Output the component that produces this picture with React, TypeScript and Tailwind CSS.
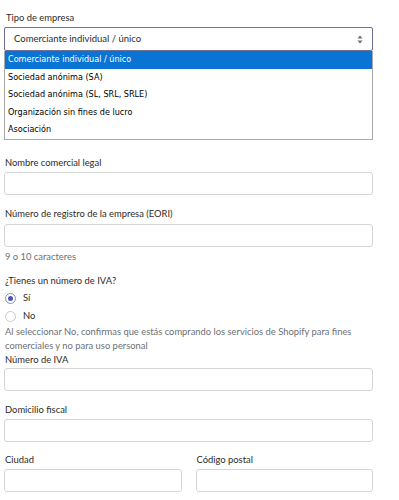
import React from "react";

const font = { fontFamily: 'Lato, "Open Sans", sans-serif' };

const Field = ({ label, className = "", gap = "mt-[2px]" }: { label: string; className?: string; gap?: string }) => (
  <div className={className}>
    <div className="text-[9.4px] leading-[14px] text-[#2b2b2b] pl-px">{label}</div>
    <div className={`${gap} h-[23px] w-full rounded-[3px] border border-[#d4d6d8] bg-white`} />
  </div>
);

const options = [
  "Comerciante individual / único",
  "Sociedad anónima (SA)",
  "Sociedad anónima (SL, SRL, SRLE)",
  "Organización sin fines de lucro",
  "Asociación",
];

export default function App() {
  return (
    <div className="w-[399px] h-[500px] bg-white overflow-hidden" style={font}>
      <div className="ml-[4px] w-[369px] pt-[11px]">
        <div className="text-[9.4px] leading-[14px] text-[#2b2b2b] pl-[2px]">Tipo de empresa</div>
        <div className="relative mt-[2px]">
          <div className="flex h-[24px] items-center justify-between rounded-[2px] border border-[#6c6f96] bg-white pl-[9px] pr-[9px] text-[9.5px] text-[#2b2b2b]">
            <span>Comerciante individual / único</span>
            <svg width="6" height="9" viewBox="0 0 6 9" className="text-[#6d7175]">
              <path d="M3 0.5 L5.5 3.5 H0.5 Z" fill="currentColor" />
              <path d="M3 8.5 L5.5 5.5 H0.5 Z" fill="currentColor" />
            </svg>
          </div>
          <div
            className="absolute left-0 top-full z-10 w-[369px] border border-[#a9a9a9] border-t-0 bg-white text-[9px] text-black"
            style={{ fontFamily: '"DejaVu Sans Condensed", "Liberation Sans", sans-serif' }}
          >
            {options.map((o, i) => (
              <div
                key={o}
                className={`h-[17.5px] leading-[17.5px] pl-[3px] ${i === 0 ? "bg-[#0a74d4] text-white" : ""}`}
              >
                {o}
              </div>
            ))}
          </div>
        </div>

        {/* input hidden under the open list */}
        <div className="mt-[43px] h-[23px] w-full rounded-[3px] border border-[#d4d6d8]" />

        <Field label="Nombre comercial legal" className="mt-[39px]" />
        <Field label="Número de registro de la empresa (EORI)" className="mt-[12px]" gap="mt-[3px]" />
        <div className="mt-[3px] text-[9.4px] leading-[14px] text-[#6d7175] pl-px">9 o 10 caracteres</div>

        <div className="mt-[10px] text-[9.4px] leading-[14px] text-[#2b2b2b] pl-px">¿Tienes un número de IVA?</div>
        <div className="mt-[1px] flex h-[18px] items-center gap-[7px] pl-px">
          <span className="flex h-[11px] w-[11px] items-center justify-center rounded-full border border-[#8a8fb8] bg-white">
            <span className="h-[5px] w-[5px] rounded-full bg-[#4b56b8]" />
          </span>
          <span className="text-[9.4px] text-[#2b2b2b]">Sí</span>
        </div>
        <div className="flex h-[18px] items-center gap-[7px] pl-px">
          <span className="h-[11px] w-[11px] rounded-full border border-[#c9cccf] bg-white" />
          <span className="text-[9.4px] text-[#2b2b2b]">No</span>
        </div>
        <div className="text-[9.4px] leading-[14px] text-[#6d7175] pl-px">
          Al seleccionar No, confirmas que estás comprando los servicios de Shopify para fines comerciales y no para uso personal
        </div>
        <div className="text-[9.4px] leading-[14px] text-[#2b2b2b] pl-px">Número de IVA</div>
        <div className="mt-[1px] h-[23px] w-full rounded-[3px] border border-[#d4d6d8]" />

        <Field label="Domicilio fiscal" className="mt-[12px]" />

        <div className="mt-[11px] grid grid-cols-2 gap-[14px]">
          <Field label="Ciudad" />
          <Field label="Código postal" />
        </div>
      </div>
    </div>
  );
}
